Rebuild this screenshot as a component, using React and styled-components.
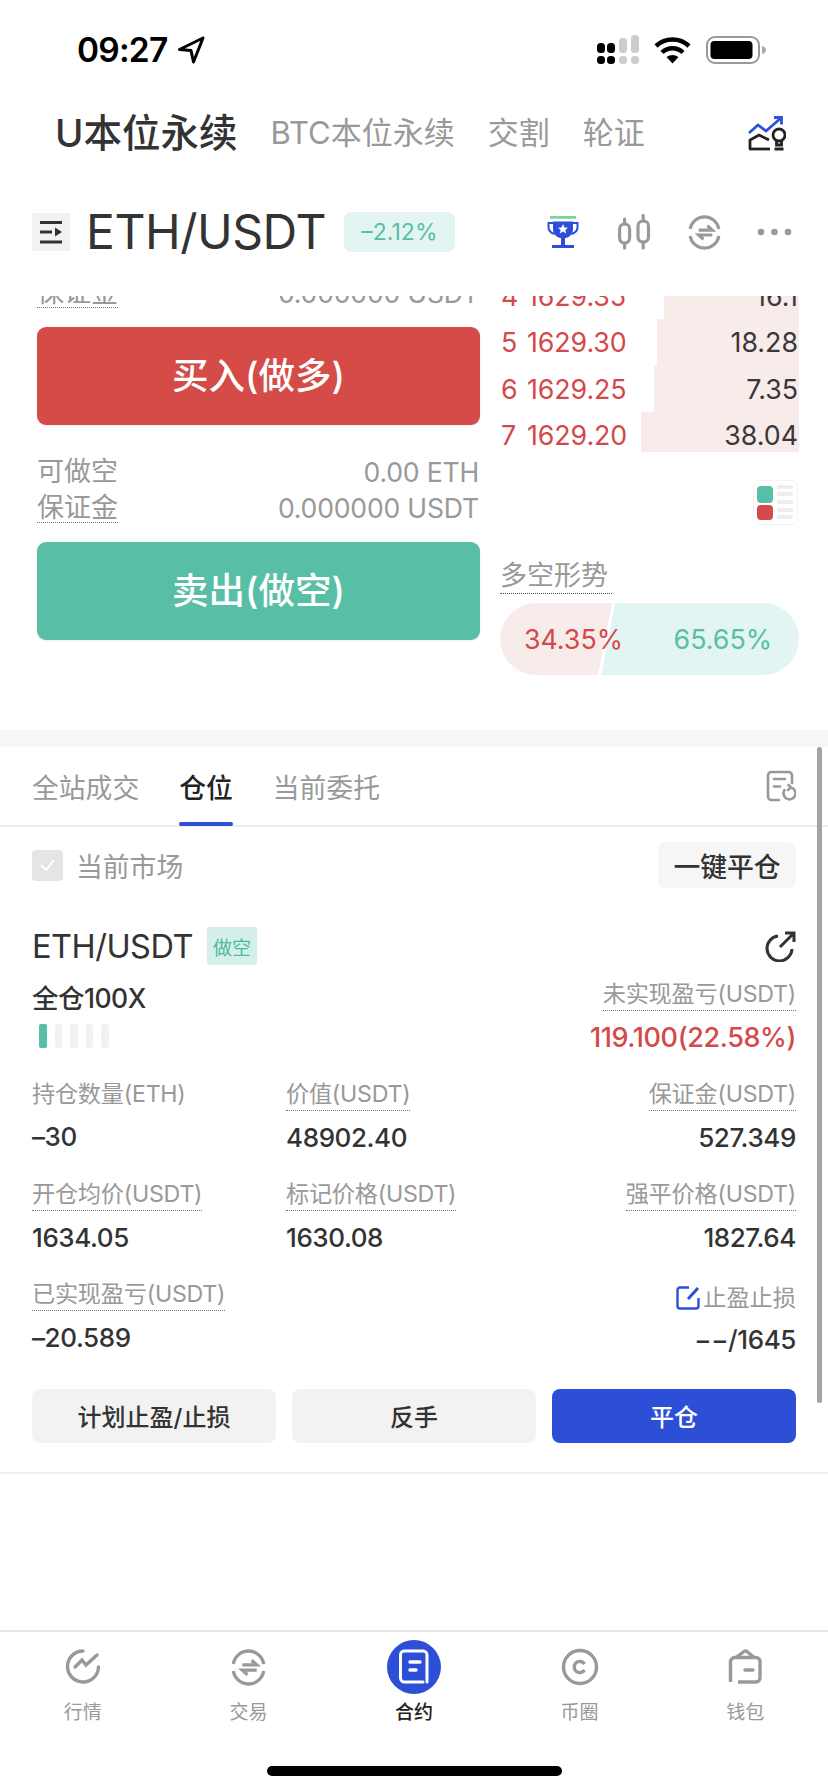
import React from 'react';
import styled, { createGlobalStyle } from 'styled-components';

const Global = createGlobalStyle`
  html, body { margin: 0; padding: 0; background: #fff; }
  body { font-family: Inter, "Noto Sans CJK SC", sans-serif; color: #333; }
  * { box-sizing: border-box; }
`;

const BLUE = '#2d4fd8';
const RED = '#d4494a';
const GREEN = '#58bfa6';
const GREY = '#999';

const Page = styled.div`
  width: 828px; height: 1792px; display: flex; flex-direction: column; overflow: hidden; background: #fff;
`;
const StatusBar = styled.div`
  height: 90px; padding: 10px 62px 0 77px; display: flex; align-items: center; justify-content: space-between; flex: none;
`;
const StatusLeft = styled.div`display: flex; align-items: center; gap: 10px;`;
const Time = styled.span`font-size: 33.5px; font-weight: 600; color: #000; line-height: 40px; letter-spacing: -0.8px;`;
const StatusRight = styled.div`display: flex; align-items: center; gap: 15px;`;

const TitleRow = styled.div`
  height: 86px; flex: none; padding: 0 42px 0 55px; display: flex; align-items: center; gap: 33px;
`;
const MarketTab = styled.span`
  font-size: ${p => (p.$active ? 38.5 : 31)}px; font-weight: ${p => (p.$active ? 500 : 400)};
  color: ${p => (p.$active ? '#333' : GREY)}; line-height: 48px; white-space: nowrap;
`;
const PushRight = styled.div`margin-left: auto; display: flex; align-items: center;`;

const SymbolRow = styled.div`
  height: 120px; flex: none; padding: 0 36px 8px 32px; display: flex; align-items: center;
`;
const MenuBox = styled.div`
  width: 38px; height: 38px; background: #f2f2f2; display: flex; align-items: center; justify-content: center;
`;
const Symbol = styled.span`font-size: 48px; line-height: 56px; margin-left: 16px; color: #333; letter-spacing: -0.45px;`;
const ChangeTag = styled.span`
  margin-left: 18px; width: 111px; height: 40px; background: #e3f5f2; border-radius: 8px; color: ${GREEN};
  font-size: 23px; display: flex; align-items: center; justify-content: center;
`;
const IconGroup = styled.div`margin-left: auto; display: flex; align-items: center; gap: 35px;`;

const Scroll = styled.div`flex: 1; min-height: 0; overflow: hidden; position: relative;`;
const ScrollThumb = styled.div`
  position: absolute; top: 451px; right: 6px; width: 5px; height: 656px; border-radius: 3px; background: #a3a3a3;
`;
const Trade = styled.section`height: 434px; padding-left: 37px; display: flex; gap: 20px; overflow: hidden;`;
const LeftCol = styled.div`width: 443px; flex: none; margin-top: -21px;`;
const InfoBlock = styled.div`margin-top: ${p => p.$top || 0}px;`;
const InfoRow = styled.div`
  height: 36px; display: flex; align-items: center; justify-content: space-between; color: ${GREY}; font-size: 27px;
`;
const InfoLabel = styled.span`
  line-height: 28px; ${p => p.$dotted && 'border-bottom: 1px dotted #777;'}
`;
const InfoValue = styled.span`font-size: 26.6px; letter-spacing: -0.2px; padding-right: 1px;`;
const BigButton = styled.div`
  margin-top: 16px; height: 98px; padding-bottom: 5px; border-radius: 9px; background: ${p => p.$bg}; color: #fff; font-size: 36.5px; font-weight: 500;
  display: flex; align-items: center; justify-content: center; box-shadow: 0 1px 2px rgba(0,0,0,.08);
`;
const RightCol = styled.div`width: 299px; flex: none; display: flex; flex-direction: column; margin-top: -23.5px;`;
const BookRow = styled.div`
  height: ${p => p.$h || 46.5}px; display: flex; font-size: 26.8px; line-height: 47px; flex: none;
  background: linear-gradient(to left, #f8eceb ${p => p.$depth}px, transparent ${p => p.$depth}px);
`;
const BookIndex = styled.span`width: 27px; color: ${RED}; padding-left: 1px;`;
const BookPrice = styled.span`color: ${RED}; letter-spacing: -0.1px;`;
const BookVol = styled.span`margin-left: auto; padding-right: 1px; color: #3b3639;`;
const LegendBox = styled.div`
  align-self: flex-end; margin: 28px 1px 0 0; width: 45px; height: 45px; border: 1.5px solid #f3f3f3; border-radius: 7px;
  display: flex; align-items: center; justify-content: center; flex: none;
`;
const TrendLabel = styled.span`
  align-self: flex-start; margin-top: 34px; font-size: 27px; line-height: 34px; color: ${GREY}; border-bottom: 1px dotted #555; padding-right: 4px;
`;
const Pill = styled.div`
  margin-top: 9px; height: 72px; border-radius: 36px; display: flex; font-size: 26.8px; align-items: center; flex: none;
  background: linear-gradient(101deg, #f8eceb 110px, #fff 110px, #fff 113px, #e2f5f2 113px);
`;
const PillPct = styled.span`color: ${p => p.$c}; position: relative; width: ${p => p.$w}px; text-align: right;`;

const Band = styled.div`height: 17px; background: #f6f6f6;`;
const Tabs = styled.div`
  height: 80px; padding: 0 32px; display: flex; gap: 40px; align-items: stretch; border-bottom: 2px solid #ececec;
`;
const Tab = styled.div`
  position: relative; display: flex; align-items: center; font-size: 26.8px; font-weight: ${p => (p.$active ? 500 : 400)};
  color: ${p => (p.$active ? '#222' : GREY)};
  ${p => p.$active && `&::after { content: ''; position: absolute; left: 0; right: 0; bottom: -1px; height: 4px; border-radius: 2px; background: ${BLUE}; }`}
`;
const FilterRow = styled.div`
  margin-top: 15px; padding: 0 32px; display: flex; align-items: center; justify-content: space-between;
`;
const FilterLeft = styled.div`display: flex; align-items: center; gap: 13px; font-size: 26.8px; color: ${GREY};`;
const CheckBox = styled.div`
  width: 31px; height: 31px; border-radius: 4px; background: #e5e5e5; display: flex; align-items: center; justify-content: center;
`;
const CloseAll = styled.div`
  width: 138px; height: 46px; border-radius: 7px; background: #f6f6f6; color: #333; font-size: 26.8px; font-weight: 500;
  display: flex; align-items: center; justify-content: center;
`;
const Position = styled.section`padding: 0 32px 29px; border-bottom: 2px solid #eeeeee;`;
const PosHead = styled.div`margin-top: 39px; height: 38px; display: flex; align-items: center; justify-content: space-between;`;
const PosName = styled.div`display: flex; align-items: center; gap: 14px; font-size: 32.5px; font-weight: 400; color: #333; letter-spacing: -0.5px;`;
const SideTag = styled.span`
  width: 50px; height: 38px; background: #d5f0eb; border-radius: 2px; color: #4fb89f; font-size: 19px; letter-spacing: 0;
  display: flex; align-items: center; justify-content: center;
`;
const PosSummary = styled.div`display: flex; justify-content: space-between; margin-top: 13px;`;
const Leverage = styled.div`font-size: 26.5px; font-weight: 500; line-height: 40px; letter-spacing: -0.5px;`;
const Bars = styled.div`display: flex; gap: 8px; padding-left: 7px; margin-top: 6px;`;
const Bar = styled.div`width: 7.5px; height: 24px; border-radius: 2px; background: ${p => (p.$on ? GREEN : '#f2f2f2')};`;
const Cell = styled.div`display: flex; flex-direction: column; align-items: ${p => (p.$right ? 'flex-end' : 'flex-start')};`;
const DataLabel = styled.span`
  font-size: 23.2px; line-height: 32px; color: ${GREY}; white-space: nowrap; letter-spacing: -0.25px;
  ${p => p.$dotted && 'border-bottom: 1px dotted #777;'}
`;
const DataValue = styled.span`
  margin-top: 7px; font-size: ${p => p.$size || 26}px; line-height: 40px; font-weight: 500; white-space: nowrap; letter-spacing: -0.4px;
  color: ${p => p.$c || '#333'};
`;
const Grid = styled.div`
  margin-top: 20px; display: grid; grid-template-columns: 254px 1fr 1fr; row-gap: 20px;
`;
const TpLabel = styled.div`display: flex; align-items: center; gap: 3px; font-size: 23.2px; line-height: 32px; color: ${GREY}; margin-top: 4px;`;
const TpValue = styled(DataValue)`margin-top: 6px;`;
const Actions = styled.div`margin-top: 29px; display: grid; grid-template-columns: repeat(3, 1fr); gap: 16px;`;
const Action = styled.div`
  height: 54px; padding-bottom: 2px; border-radius: 8px; font-size: 24px; font-weight: 500; display: flex; align-items: center; justify-content: center;
  background: ${p => (p.$primary ? BLUE : '#f2f2f2')}; color: ${p => (p.$primary ? '#fff' : '#333')};
`;

const TabBar = styled.nav`height: 162px; flex: none; border-top: 2px solid #e5e5e5; display: flex; flex-direction: column;`;
const NavGrid = styled.div`display: grid; grid-template-columns: repeat(5, 1fr); padding-top: 8px;`;
const NavItem = styled.div`display: flex; flex-direction: column; align-items: center;`;
const NavIcon = styled.div`
  width: 54px; height: 54px; border-radius: 50%; display: flex; align-items: center; justify-content: center;
  background: ${p => (p.$active ? BLUE : 'transparent')};
`;
const NavLabel = styled.span`
  margin-top: 7px; font-size: 19px; line-height: 24px; color: ${p => (p.$active ? '#222' : GREY)}; font-weight: ${p => (p.$active ? 500 : 400)};
`;
const HomeBar = styled.div`margin: 41px auto 0; width: 295px; height: 10px; border-radius: 5px; background: #000;`;

const Signal = () => (
  <svg width="42" height="30" viewBox="0 0 42 30">
    <rect x="0" y="8" width="8" height="10" rx="3.5" fill="#000" />
    <rect x="0" y="21" width="8" height="8" rx="3.5" fill="#000" />
    <rect x="10" y="8" width="8" height="10" rx="3.5" fill="#000" />
    <rect x="10" y="21" width="8" height="8" rx="3.5" fill="#000" />
    <rect x="22" y="3" width="8" height="15" rx="3.5" fill="#ccc" />
    <rect x="22" y="21" width="8" height="8" rx="3.5" fill="#ccc" />
    <rect x="34" y="0" width="8" height="18" rx="3.5" fill="#ccc" />
    <rect x="34" y="21" width="8" height="8" rx="3.5" fill="#ccc" />
  </svg>
);
const Wifi = () => (
  <svg width="37" height="28" viewBox="0 0 37 28" fill="none" stroke="#000" strokeWidth="4.5">
    <path d="M2 10 A 24 24 0 0 1 35 10" />
    <path d="M8 16.5 A 15 15 0 0 1 29 16.5" />
    <path d="M18.5 27.5 L12.5 21 Q18.5 17 24.5 21 Z" fill="#000" stroke="none" />
  </svg>
);
const Battery = () => (
  <svg width="60" height="28" viewBox="0 0 60 28">
    <rect x="1" y="1" width="52" height="26" rx="8" fill="none" stroke="#999" strokeWidth="2" />
    <rect x="4.5" y="5" width="42" height="18" rx="4" fill="#000" />
    <path d="M56 10 q4 1 4 4 t-4 4 z" fill="#aaa" />
  </svg>
);
const Locate = () => (
  <svg width="28" height="28" viewBox="0 0 28 28" fill="none" stroke="#000" strokeWidth="3" strokeLinejoin="round">
    <path d="M26 2 L2.5 13.5 L14 14.5 L16.5 26 Z" />
  </svg>
);
const Insight = () => (
  <svg width="38" height="35" viewBox="0 0 38 35" fill="none" strokeWidth="2.8">
    <path d="M1 17 L10 9 L18 15 L33 2" stroke={BLUE} />
    <path d="M26 1.5 H33.5 V8.5" stroke={BLUE} />
    <path d="M2 33 V24 L11 19 L21 24" stroke="#222" />
    <path d="M1 33 H22" stroke="#222" />
    <circle cx="31" cy="19" r="6" stroke="#222" />
    <path d="M28.5 25 V29 H33.5 V25 M26.5 33 H35.5" stroke="#222" />
  </svg>
);
const MenuIcon = () => (
  <svg width="24" height="24" viewBox="0 0 24 24" fill="none" stroke="#333" strokeWidth="3">
    <path d="M1 2.5 H23 M1 22 H23 M1 12 H13" />
    <path d="M16 7.5 L23 12 L16 16.5 Z" fill="#333" stroke="none" />
  </svg>
);
const Trophy = () => (
  <svg width="35" height="36" viewBox="0 0 35 36">
    <rect x="3" y="2" width="26" height="2.8" fill="#7bd4a6" />
    <path d="M6 7.5 H26 V15 C26 21 21 24.5 16 24.5 C11 24.5 6 21 6 15 Z" fill={BLUE} />
    <path d="M6 9 H1.5 V13 C1.5 17 4 19 7.5 20 M26 9 H30.5 V13 C30.5 17 28 19 24.5 20" fill="none" stroke={BLUE} strokeWidth="2" />
    <rect x="14" y="24" width="4" height="7" fill={BLUE} />
    <rect x="5" y="31" width="22" height="3" fill={BLUE} />
    <path d="M16 10 L17.5 13.4 L21 13.7 L18.3 16 L19.2 19.5 L16 17.6 L12.8 19.5 L13.7 16 L11 13.7 L14.5 13.4 Z" fill="#fff" />
  </svg>
);
const Candles = () => (
  <svg width="35" height="36" viewBox="0 0 35 36" fill="none" stroke={GREY} strokeWidth="3.2" strokeLinecap="round">
    <rect x="2.6" y="10" width="10" height="19" rx="5" />
    <rect x="21" y="7" width="10.5" height="21" rx="5" />
    <path d="M7.6 5 V10 M7.6 29 V34 M26.2 1.5 V7 M26.2 28 V34" />
  </svg>
);
const Swap = ({ size = 35, c = GREY }) => (
  <svg width={size} height={size} viewBox="0 0 36 36" fill="none" stroke={c} strokeWidth="3.2">
    <path d="M3.2 14.5 A 15 15 0 0 1 32.8 14.5" />
    <path d="M3.2 21.5 A 15 15 0 0 0 32.8 21.5" />
    <path d="M12 15.5 H26 L21 11" />
    <path d="M26 20.5 H12 L17 25" />
  </svg>
);
const Dots = () => (
  <svg width="35" height="36" viewBox="0 0 35 36" fill={GREY}>
    <circle cx="4" cy="18" r="3.3" />
    <circle cx="17.5" cy="18" r="3.3" />
    <circle cx="31" cy="18" r="3.3" />
  </svg>
);
const Legend = () => (
  <svg width="37" height="37" viewBox="0 0 37 37">
    <rect x="0" y="2" width="16" height="17" rx="4" fill={GREEN} />
    <rect x="0" y="21" width="16" height="15" rx="4" fill={RED} />
    {[3, 10, 18, 26, 33].map(y => <rect key={y} x="20" y={y - 2} width="16" height="4" rx="1" fill="#eeeeee" />)}
  </svg>
);
const OrdersIcon = () => (
  <svg width="30" height="32" viewBox="0 0 30 32" fill="none" stroke={GREY} strokeWidth="2.6" strokeLinecap="round">
    <path d="M26 13 V5.5 A3.5 3.5 0 0 0 22.5 2 H5.5 A3.5 3.5 0 0 0 2 5.5 V26.5 A3.5 3.5 0 0 0 5.5 30 H13" />
    <path d="M8 9 H19 M8 16.5 H14" />
    <path d="M18.5 20 A 6 6 0 1 0 25 17.5 M25 17.5 L22.5 15 M25 17.5 L22 20" />
  </svg>
);
const ShareIcon = () => (
  <svg width="31" height="31" viewBox="0 0 31 31" fill="none" stroke="#333" strokeWidth="3">
    <path d="M13 5 A 12.5 12.5 0 1 0 27 18" />
    <path d="M15 16 L29 2 M20 2 H29 V11" />
  </svg>
);
const EditIcon = () => (
  <svg width="24" height="24" viewBox="0 0 24 24" fill="none" stroke={BLUE} strokeWidth="2.4">
    <path d="M13 1.5 H4 A2.5 2.5 0 0 0 1.5 4 V20 A2.5 2.5 0 0 0 4 22.5 H20 A2.5 2.5 0 0 0 22.5 20 V12" />
    <path d="M12 13 L22 2" strokeWidth="3" />
  </svg>
);
const Check = () => (
  <svg width="17" height="14" viewBox="0 0 17 14" fill="none" stroke="#fff" strokeWidth="2"><path d="M2 7 L7 12 L15 2" /></svg>
);
const NavMarket = () => (
  <svg width="36" height="36" viewBox="0 0 36 36" fill="none" stroke={GREY} strokeWidth="3.4" strokeLinecap="round">
    <path d="M18 2 A 15.5 15.5 0 1 0 33.5 18" />
    <path d="M10 18 L17 11 L21 16 L32 6" />
  </svg>
);
const NavCoin = () => (
  <svg width="38" height="38" viewBox="0 0 38 38" fill="none" stroke={GREY} strokeWidth="3.4">
    <circle cx="19" cy="19" r="16.5" />
    <path d="M23.5 16 A 5.6 5.6 0 1 0 23.5 22" />
  </svg>
);
const NavWallet = () => (
  <svg width="34" height="36" viewBox="0 0 34 36" fill="none" stroke={GREY} strokeWidth="3.4">
    <path d="M2.5 33 V13 A4.5 4.5 0 0 1 7 8.5 H28 A4 4 0 0 1 32 12.5 V29 A4 4 0 0 1 28 33 H10" />
    <path d="M8 8.5 L16 2.5 A 2.5 2.5 0 0 1 19 2.5 L26 8.5" />
    <path d="M17 21 H25" strokeLinecap="round" />
  </svg>
);
const NavBook = () => (
  <svg width="32" height="36" viewBox="0 0 32 36" fill="none" stroke="#fff" strokeWidth="3" strokeLinecap="round">
    <path d="M25 33 H7 A4 4 0 0 1 2.5 29 V6 A4 4 0 0 1 7 2 H25 A4 4 0 0 1 29 6 V33" />
    <path d="M12 13 H22 M12 21 H18" strokeWidth="3.4" />
  </svg>
);

const book = [
  { i: 4, p: '1629.35', v: '16.1', d: 135 },
  { i: 5, p: '1629.30', v: '18.28', d: 142 },
  { i: 6, p: '1629.25', v: '7.35', d: 145 },
  { i: 7, p: '1629.20', v: '38.04', d: 158, h: 40 },
];
const navItems = [
  { label: '行情', icon: <NavMarket /> },
  { label: '交易', icon: <Swap size={37} /> },
  { label: '合约', icon: <NavBook />, active: true },
  { label: '币圈', icon: <NavCoin /> },
  { label: '钱包', icon: <NavWallet /> },
];

const Datum = ({ label, value, right, dotted = true }) => (
  <Cell $right={right}>
    <DataLabel $dotted={dotted}>{label}</DataLabel>
    <DataValue>{value}</DataValue>
  </Cell>
);

export default function App() {
  return (
    <Page>
      <Global />
      <StatusBar>
        <StatusLeft><Time>09:27</Time><Locate /></StatusLeft>
        <StatusRight><Signal /><Wifi /><Battery /></StatusRight>
      </StatusBar>
      <TitleRow>
        <MarketTab $active>U本位永续</MarketTab>
        <MarketTab>BTC本位永续</MarketTab>
        <MarketTab>交割</MarketTab>
        <MarketTab>轮证</MarketTab>
        <PushRight><Insight /></PushRight>
      </TitleRow>
      <SymbolRow>
        <MenuBox><MenuIcon /></MenuBox>
        <Symbol>ETH/USDT</Symbol>
        <ChangeTag>–2.12%</ChangeTag>
        <IconGroup><Trophy /><Candles /><Swap /><Dots /></IconGroup>
      </SymbolRow>
      <Scroll>
        <Trade>
          <LeftCol>
            <InfoRow><InfoLabel $dotted>保证金</InfoLabel><InfoValue>0.000000 USDT</InfoValue></InfoRow>
            <BigButton $bg="#d54b47">买入(做多)</BigButton>
            <InfoBlock $top={29}>
              <InfoRow><InfoLabel>可做空</InfoLabel><InfoValue>0.00 ETH</InfoValue></InfoRow>
              <InfoRow><InfoLabel $dotted>保证金</InfoLabel><InfoValue>0.000000 USDT</InfoValue></InfoRow>
            </InfoBlock>
            <BigButton $bg="#58bfa6">卖出(做空)</BigButton>
          </LeftCol>
          <RightCol>
            {book.map(r => (
              <BookRow key={r.i} $depth={r.d} $h={r.h}>
                <BookIndex>{r.i}</BookIndex>
                <BookPrice>{r.p}</BookPrice>
                <BookVol>{r.v}</BookVol>
              </BookRow>
            ))}
            <LegendBox><Legend /></LegendBox>
            <TrendLabel>多空形势</TrendLabel>
            <Pill>
              <PillPct $c={RED} $w={123}>34.35%</PillPct>
              <PillPct $c={GREEN} $w={149}>65.65%</PillPct>
            </Pill>
          </RightCol>
        </Trade>
        <Band />
        <Tabs>
          <Tab>全站成交</Tab>
          <Tab $active>仓位</Tab>
          <Tab>当前委托</Tab>
          <PushRight><OrdersIcon /></PushRight>
        </Tabs>
        <FilterRow>
          <FilterLeft><CheckBox><Check /></CheckBox>当前市场</FilterLeft>
          <CloseAll>一键平仓</CloseAll>
        </FilterRow>
        <Position>
          <PosHead>
            <PosName>ETH/USDT<SideTag>做空</SideTag></PosName>
            <ShareIcon />
          </PosHead>
          <PosSummary>
            <div>
              <Leverage>全仓100X</Leverage>
              <Bars>
                <Bar $on /><Bar /><Bar /><Bar /><Bar />
              </Bars>
            </div>
            <Cell $right>
              <DataLabel $dotted>未实现盈亏(USDT)</DataLabel>
              <DataValue $c={RED} $size={27}>119.100(22.58%)</DataValue>
            </Cell>
          </PosSummary>
          <Grid>
            <Datum label="持仓数量(ETH)" value="–30" dotted={false} />
            <Datum label="价值(USDT)" value="48902.40" />
            <Datum label="保证金(USDT)" value="527.349" right />
            <Datum label="开仓均价(USDT)" value="1634.05" />
            <Datum label="标记价格(USDT)" value="1630.08" />
            <Datum label="强平价格(USDT)" value="1827.64" right />
            <Datum label="已实现盈亏(USDT)" value="–20.589" />
            <div />
            <Cell $right>
              <TpLabel><EditIcon />止盈止损</TpLabel>
              <TpValue>−−/1645</TpValue>
            </Cell>
          </Grid>
          <Actions>
            <Action>计划止盈/止损</Action>
            <Action>反手</Action>
            <Action $primary>平仓</Action>
          </Actions>
        </Position>
        <ScrollThumb />
      </Scroll>
      <TabBar>
        <NavGrid>
          {navItems.map(n => (
            <NavItem key={n.label}>
              <NavIcon $active={n.active}>{n.icon}</NavIcon>
              <NavLabel $active={n.active}>{n.label}</NavLabel>
            </NavItem>
          ))}
        </NavGrid>
        <HomeBar />
      </TabBar>
    </Page>
  );
}
